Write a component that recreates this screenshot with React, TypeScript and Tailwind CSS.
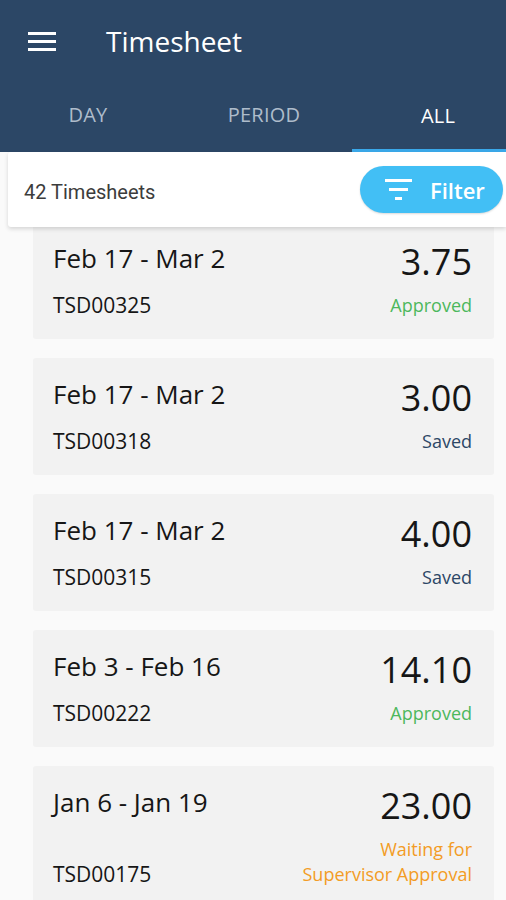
import React from "react";

interface Sheet {
    range: string;
    code: string;
    hours: string;
    status: string[];
    color: string;
}

const sheets: Sheet[] = [
    { range: "Feb 17 - Mar 2", code: "TSD00325", hours: "3.75", status: ["Approved"], color: "text-[#4cb85c]" },
    { range: "Feb 17 - Mar 2", code: "TSD00318", hours: "3.00", status: ["Saved"], color: "text-[#2c4766]" },
    { range: "Feb 17 - Mar 2", code: "TSD00315", hours: "4.00", status: ["Saved"], color: "text-[#2c4766]" },
    { range: "Feb 3 - Feb 16", code: "TSD00222", hours: "14.10", status: ["Approved"], color: "text-[#4cb85c]" },
    { range: "Jan 6 - Jan 19", code: "TSD00175", hours: "23.00", status: ["Waiting for", "Supervisor Approval"], color: "text-[#f39c25]" },
];

function MenuIcon() {
    return (
        <svg width="28" height="19" viewBox="0 0 28 19" fill="#ffffff">
            <rect x="0" y="0" width="28" height="3" />
            <rect x="0" y="8" width="28" height="3" />
            <rect x="0" y="16" width="28" height="3" />
        </svg>
    );
}

function FilterIcon() {
    return (
        <svg width="27" height="21" viewBox="0 0 27 21" fill="#ffffff">
            <rect x="0" y="0" width="27" height="3" />
            <rect x="4" y="9" width="19" height="3" />
            <rect x="10" y="18" width="7" height="3" />
        </svg>
    );
}

export default function App() {
    return (
        <div className="w-[506px] h-[900px] overflow-hidden bg-[#fafafa] font-['Open_Sans',sans-serif]">
            {/* Header */}
            <div className="bg-[#2c4766]">
                <div className="h-[82px] flex items-center">
                    <div className="pl-[28px] flex items-center">
                        <MenuIcon />
                    </div>
                    <h1 className="ml-[50px] text-[28px] leading-none text-white">Timesheet</h1>
                </div>
                <div className="h-[70px] flex text-[20px] tracking-[0.01em]">
                    <div className="w-[176px] flex items-center justify-center pb-[4px] text-[#aebccb]">DAY</div>
                    <div className="w-[176px] flex items-center justify-center pb-[4px] text-[#aebccb]">PERIOD</div>
                    <div className="flex-1 flex items-center justify-center pl-[18px] text-white border-b-[3px] border-[#3aa9ea]">
                        ALL
                    </div>
                </div>
            </div>

            {/* Count + filter */}
            <div className="relative z-10 ml-[8px] h-[75px] bg-white rounded-l-[3px] shadow-[0_2px_4px_rgba(0,0,0,0.15)] flex items-center justify-between pl-[16px] pr-[3px]">
                <span className="pt-[5px] font-['Roboto',sans-serif] text-[20px] text-[#3c3c3c]">42 Timesheets</span>
                <button className="w-[143px] h-[47px] rounded-full bg-[#42bff5] flex items-center pl-[25px] gap-[18px] shadow-[0_1px_2px_rgba(0,0,0,0.15)]">
                    <FilterIcon />
                    <span className="text-[22px] font-semibold text-white leading-none">Filter</span>
                </button>
            </div>

            {/* List */}
            <div className="-mt-[5px] flex flex-col gap-[19px] ml-[33px] mr-[12px]">
                {sheets.map((s) => (
                    <div key={s.code} className="bg-[#f2f2f2] rounded-[3px] flex justify-between pt-[21px] pb-[21px] pl-[20px] pr-[22px]">
                        <div className="flex flex-col justify-between text-[#161616]">
                            <div className="text-[26px] leading-[30px]">{s.range}</div>
                            <div className="text-[21px] leading-[26px]">{s.code}</div>
                        </div>
                        <div className="flex flex-col items-end">
                            <div className="text-[36px] leading-[38px] text-[#161616]">{s.hours}</div>
                            <div className={`mt-[12px] text-[18px] font-medium leading-[25px] text-right ${s.color}`}>
                                {s.status.map((line) => (
                                    <div key={line}>{line}</div>
                                ))}
                            </div>
                        </div>
                    </div>
                ))}
            </div>
        </div>
    );
}
